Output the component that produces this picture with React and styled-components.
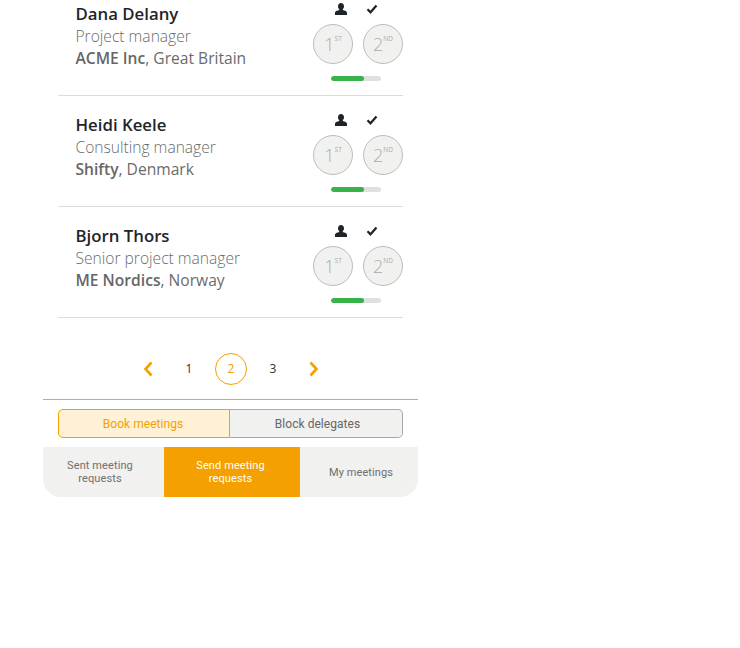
import styled, { createGlobalStyle } from "styled-components";

const GlobalStyle = createGlobalStyle`
  html, body {
    background: #fff;
    margin: 0;
    padding: 0;
  }
`;

const Panel = styled.div`
  display: flex;
  flex-direction: column;
  margin-left: 43px;
  width: 375px;
`;

const List = styled.div`
  margin-top: -15px;
  padding: 0 15px;
`;

const Row = styled.div`
  border-bottom: 1px solid #dcdcdc;
  box-sizing: border-box;
  display: flex;
  height: 111px;
  justify-content: space-between;
`;

const Info = styled.div`
  font-family: "Open Sans", sans-serif;
  padding: 18px 0 0 17.5px;
`;

const Name = styled.div`
  color: #1f2429;
  font-size: 16.8px;
  font-weight: 600;
  line-height: 22px;
`;

const Role = styled.div`
  color: #6b6b6b;
  font-size: 15.6px;
  font-weight: 300;
  line-height: 22px;
`;

const Company = styled(Role)`
  font-weight: 400;
  b {
    font-weight: 600;
    color: #666;
  }
`;

const Status = styled.div`
  align-items: center;
  display: flex;
  flex-direction: column;
  width: 90px;
`;

const Icons = styled.div`
  align-items: center;
  display: flex;
  gap: 18px;
  height: 16px;
  margin: 16px 0 7px -4px;
`;

const Slots = styled.div`
  display: flex;
  gap: 10px;
`;

const Slot = styled.div`
  align-items: center;
  background: #f1f1f0;
  border: 1px solid #bdbdbb;
  border-radius: 50%;
  box-sizing: border-box;
  color: #ababab;
  display: flex;
  font-family: "Open Sans", sans-serif;
  font-size: 18px;
  font-weight: 300;
  height: 40px;
  justify-content: center;
  width: 40px;
  sup {
    font-size: 6.5px;
    font-weight: 400;
    line-height: 1;
    margin-bottom: 10px;
  }
`;

const Progress = styled.div`
  background: #e0e0e0;
  border-radius: 3px;
  height: 5px;
  margin: 12px 0 0 -4px;
  overflow: hidden;
  width: 50px;
`;

const ProgressFill = styled.div`
  background: #38b34a;
  border-radius: 3px;
  height: 100%;
  width: ${(p) => p.$value}%;
`;

const Pagination = styled.div`
  align-items: center;
  box-sizing: border-box;
  display: flex;
  height: 81px;
  padding: 20px 0 0 100px;
`;

const Arrow = styled.svg`
  display: block;
  flex: none;
`;

const Page = styled.div`
  align-items: center;
  border: 1px solid ${(p) => (p.$active ? "#f4a000" : "transparent")};
  border-radius: 50%;
  box-sizing: border-box;
  color: ${(p) => (p.$active ? "#f4a000" : "#333")};
  display: flex;
  font-family: "Open Sans", sans-serif;
  font-size: 12px;
  height: 32px;
  justify-content: center;
  width: 32px;
`;

const Pages = styled.div`
  display: flex;
  gap: 10px;
  margin: 0 20px;
`;

const Footer = styled.div`
  border-top: 1px solid #aeaeae;
  display: flex;
  flex-direction: column;
  padding-top: 9px;
`;

const Segments = styled.div`
  display: flex;
  height: 29px;
  margin: 0 15px 9px;
`;

const Segment = styled.div`
  align-items: center;
  background: ${(p) => (p.$active ? "#fff1d6" : "#f1f1f0")};
  border: 1px solid ${(p) => (p.$active ? "#f4a000" : "#a8a8a8")};
  border-left-width: ${(p) => (p.$active ? "1px" : "0")};
  border-radius: ${(p) => (p.$active ? "5px 0 0 5px" : "0 5px 5px 0")};
  box-sizing: border-box;
  color: ${(p) => (p.$active ? "#f4a000" : "#666")};
  display: flex;
  font-family: Roboto, sans-serif;
  font-size: 12px;
  font-weight: 400;
  justify-content: center;
  letter-spacing: 0.05px;
  padding: ${(p) => (p.$active ? "0 2px 0 0" : "0 0 0 3px")};
  width: ${(p) => p.$width}px;
`;

const Tabs = styled.div`
  background: #f1f1f0;
  border-radius: 0 0 18px 18px;
  display: flex;
  height: 50px;
  overflow: hidden;
`;

const Tab = styled.div`
  align-items: center;
  background: ${(p) => (p.$active ? "#f4a000" : "transparent")};
  box-sizing: border-box;
  color: ${(p) => (p.$active ? "#fff" : "#6f6f6f")};
  display: flex;
  font-family: Roboto, sans-serif;
  font-size: 11px;
  justify-content: center;
  letter-spacing: 0.1px;
  line-height: 13px;
  padding: 0 ${(p) => p.$right || 0}px 0 ${(p) => p.$left || 0}px;
  text-align: center;
  width: ${(p) => p.$width}px;
`;

const PersonIcon = () => (
  <svg width="14" height="14" viewBox="0 0 14 14">
    <path
      fill="#1f2429"
      d="M7 1C5.200 1 4 2.400 4 4.300c0 1.200.5 2.300 1.200 2.900v.9C3.600 8.600 1.500 9 1 10.500V13h12v-2.500C12.500 9 10.400 8.600 8.800 8.100v-.9c.7-.6 1.200-1.700 1.200-2.900C10 2.400 8.800 1 7 1z"
    />
  </svg>
);

const CheckIcon = () => (
  <svg width="12" height="12" viewBox="0 0 12 12">
    <path d="M1.500 6.200 4.500 9.300 10.500 2.500" fill="none" stroke="#1f2429" strokeWidth="2.200" />
  </svg>
);

const Chevron = ({ left }) => (
  <Arrow width="10" height="16" viewBox="0 0 10 16">
    <path
      d={left ? "M8.500 1.500 2.500 8l6 6.500" : "M1.500 1.500 7.500 8l-6 6.500"}
      fill="none"
      stroke="#f4a000"
      strokeWidth="2.600"
    />
  </Arrow>
);

const people = [
  { name: "Dana Delany", role: "Project manager", company: "ACME Inc", country: "Great Britain" },
  { name: "Heidi Keele", role: "Consulting manager", company: "Shifty", country: "Denmark" },
  { name: "Bjorn Thors", role: "Senior project manager", company: "ME Nordics", country: "Norway" },
];

const App = () => (
  <>
    <GlobalStyle />
    <Panel>
      <List>
        {people.map((person) => (
          <Row key={person.name}>
            <Info>
              <Name>{person.name}</Name>
              <Role>{person.role}</Role>
              <Company>
                <b>{person.company}</b>, {person.country}
              </Company>
            </Info>
            <Status>
              <Icons>
                <PersonIcon />
                <CheckIcon />
              </Icons>
              <Slots>
                <Slot>
                  1<sup>ST</sup>
                </Slot>
                <Slot>
                  2<sup>ND</sup>
                </Slot>
              </Slots>
              <Progress>
                <ProgressFill $value={66} />
              </Progress>
            </Status>
          </Row>
        ))}
      </List>
      <Pagination>
        <Chevron left />
        <Pages>
          <Page>1</Page>
          <Page $active>2</Page>
          <Page>3</Page>
        </Pages>
        <Chevron />
      </Pagination>
      <Footer>
        <Segments>
          <Segment $active $width={172}>Book meetings</Segment>
          <Segment $width={173}>Block delegates</Segment>
        </Segments>
        <Tabs>
          <Tab $width={121} $right={7}>
            Sent meeting
            <br />
            requests
          </Tab>
          <Tab $active $width={136} $right={3}>
            Send meeting
            <br />
            requests
          </Tab>
          <Tab $width={118} $left={4}>My meetings</Tab>
        </Tabs>
      </Footer>
    </Panel>
  </>
);

export default App;
